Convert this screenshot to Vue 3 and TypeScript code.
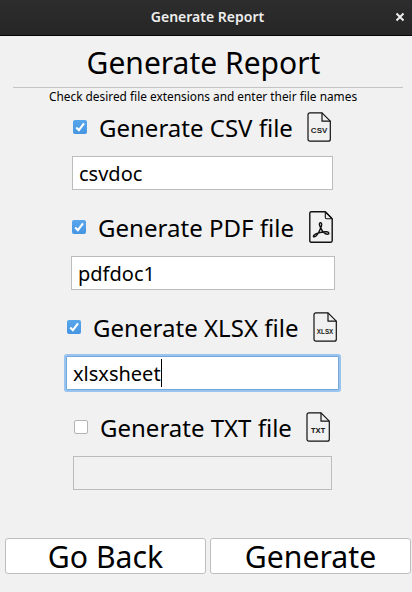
<script setup lang="ts">
import { reactive } from 'vue'

type Kind = 'csv' | 'pdf' | 'xlsx' | 'txt'

interface ExportOption {
  kind: Kind
  checked: boolean
  name: string
}

const options = reactive<ExportOption[]>([
  { kind: 'csv', checked: true, name: 'csvdoc' },
  { kind: 'pdf', checked: true, name: 'pdfdoc1' },
  { kind: 'xlsx', checked: true, name: 'xlsxsheet' },
  { kind: 'txt', checked: false, name: '' },
])

const toggle = (option: ExportOption) => {
  option.checked = !option.checked
}
</script>

<template>
  <main class="window">
    <header class="titlebar">
      <span class="titlebar-text">Generate Report</span>
      <svg class="close" viewBox="0 0 10 10"><path d="M1.5 1.5 8.5 8.5M8.5 1.5 1.5 8.5" /></svg>
    </header>

    <h1 class="heading"><span>Generate Report</span></h1>
    <hr class="divider" />
    <p class="hint">Check desired file extensions and enter their file names</p>

    <section class="options">
      <div v-for="option in options" :key="option.kind" class="option" :class="option.kind">
        <div class="option-row">
          <span class="check" :class="{ on: option.checked }" @click="toggle(option)">
            <svg v-if="option.checked" viewBox="0 0 14 14"><path d="M3.2 7.4 5.9 10.2 11 3.4" /></svg>
          </span>
          <span class="label">Generate {{ option.kind.toUpperCase() }} file</span>
          <svg v-if="option.kind === 'pdf'" class="icon pdf-icon" viewBox="0 0 24 32">
            <path d="M2.2.8H16.3L23.2 7.7V29.8Q23.2 31.2 21.8 31.2H2.2Q.8 31.2.8 29.8V2.2Q.8.8 2.2.8Z" />
            <path class="fine" d="M16.3.8V6.3Q16.3 7.7 17.7 7.7H23.2M16.7 1.2 22.8 7.3" />
            <path d="M11.6 16.6C10.2 14.2 9.8 12 11.4 11.8S13.1 14.3 11.6 17.2C9.8 21.6 7 25.8 5.2 25.8S4.9 23.6 8 22.4C11.3 21.1 15 20.5 17.8 20.8S20.3 23.4 18.4 23.3C15.6 23.2 13 19.7 11.6 16.6Z" />
          </svg>
          <svg v-else class="icon doc-icon" viewBox="0 0 24 30">
            <path d="M3 .8H15L23.3 9.2V27.2Q23.3 29.2 21.3 29.2H3Q1 29.2 1 27.2V2.8Q1 .8 3 .8Z" />
            <path d="M15 .8V9.2H23.3" />
            <text x="12.1" :y="option.kind === 'xlsx' ? 22.2 : 20.6" text-anchor="middle">{{ option.kind.toUpperCase() }}</text>
          </svg>
        </div>
        <div class="field" :class="{ focused: option.kind === 'xlsx', disabled: !option.checked }">
          <span>{{ option.name }}</span><i v-if="option.kind === 'xlsx'" class="caret"></i>
        </div>
      </div>
    </section>

    <footer class="actions">
      <button type="button">Go Back</button>
      <button type="button">Generate</button>
    </footer>
  </main>
</template>

<style>
body {
  margin: 0;
}
</style>

<style scoped>
.window {
  box-sizing: border-box;
  width: 412px;
  height: 592px;
  display: flex;
  flex-direction: column;
  overflow: hidden;
  background: #f1f1f1;
  color: #000;
  font-family: "Noto Sans", sans-serif;
}
.titlebar {
  flex: none;
  box-sizing: border-box;
  height: 36px;
  display: grid;
  grid-template-columns: 30px 1fr 27px;
  align-items: center;
  padding-bottom: 1px;
  background: linear-gradient(#2d2d2d, #262626);
  border-bottom: 1px solid #060606;
}
.titlebar-text {
  grid-column: 2;
  text-align: center;
  color: #eee;
  font-size: 14px;
  font-weight: 600;
  line-height: 20px;
  white-space: nowrap;
}
.close {
  width: 10px;
  height: 10px;
  margin-left: 10px;
  fill: none;
  stroke: #eee;
  stroke-width: 2;
}
.heading {
  margin: 0;
  height: 51px;
  line-height: 54px;
  padding-right: 5px;
  text-align: center;
  font-size: 30px;
  font-weight: 400;
  white-space: nowrap;
}
.divider {
  flex: none;
  width: 390px;
  height: 1px;
  margin: 0 0 0 13px;
  border: 0;
  background: #c4c4c4;
}
.hint {
  margin: 0;
  height: 18px;
  line-height: 16px;
  padding-right: 6px;
  text-align: center;
  font-size: 11.87px;
  white-space: nowrap;
}
.options {
  display: flex;
  flex-direction: column;
  gap: 16px;
}
.option {
  height: 84px;
}
.csv {
  width: 261px;
  margin-left: 72px;
}
.pdf {
  width: 264px;
  margin-left: 71px;
}
.xlsx {
  width: 273px;
  margin-left: 66px;
}
.txt {
  width: 259px;
  margin-left: 73px;
}
.option-row {
  height: 42px;
  display: flex;
  align-items: center;
  padding: 0 2px 0 1px;
  margin-bottom: 8px;
}
.check {
  box-sizing: border-box;
  width: 14px;
  height: 14px;
  margin-right: 12px;
  flex: none;
  border: 1px solid #b4b4b4;
  border-radius: 2px;
  background: #fff;
}
.check.on {
  border: 0;
  background: linear-gradient(#58a6ec, #4595e2);
}
.check svg {
  display: block;
  width: 14px;
  height: 14px;
  fill: none;
  stroke: #fff;
  stroke-width: 2.1;
}
.label {
  font-size: 24px;
  line-height: 42px;
  padding-top: 2px;
  white-space: nowrap;
}
.pdf .label,
.xlsx .label {
  letter-spacing: 0.03px;
}
.icon {
  flex: none;
  margin-left: auto;
  fill: none;
  stroke: #111;
  stroke-width: 1.2;
  stroke-linejoin: round;
}
.doc-icon {
  width: 24px;
  height: 30px;
}
.doc-icon text {
  fill: #1c1c1c;
  stroke: none;
  font: 700 8px "Liberation Sans", sans-serif;
}
.txt .doc-icon text {
  font: 700 7.7px "Noto Sans", sans-serif;
}
.xlsx .doc-icon text {
  font-size: 6.3px;
}
.pdf-icon {
  width: 24px;
  height: 32px;
  stroke-width: 1.4;
}
.pdf-icon .fine {
  stroke-width: 1.1;
}
.field {
  box-sizing: border-box;
  height: 34px;
  display: flex;
  align-items: center;
  padding: 0 6px;
  border: 1px solid #bcbcbc;
  background: #fff;
  font-size: 20px;
  line-height: 30px;
}
.field span {
  padding-top: 2px;
}
.field.focused {
  border-color: #75a8da;
  border-radius: 1px;
  box-shadow: 0 0 0 2px #98c4ef;
}
.field.disabled {
  background: #f1f1f1;
}
.caret {
  width: 1px;
  height: 28px;
  background: #000;
}
.actions {
  display: grid;
  grid-template-columns: 201px 201px;
  gap: 4px;
  margin-top: 48px;
  padding-left: 5px;
}
.actions button {
  box-sizing: border-box;
  height: 36px;
  padding: 2px 0 0;
  border: 1px solid #bebebe;
  border-radius: 3px;
  background: #fff;
  color: #000;
  font-family: inherit;
  font-size: 30.2px;
  line-height: 32px;
}
</style>
